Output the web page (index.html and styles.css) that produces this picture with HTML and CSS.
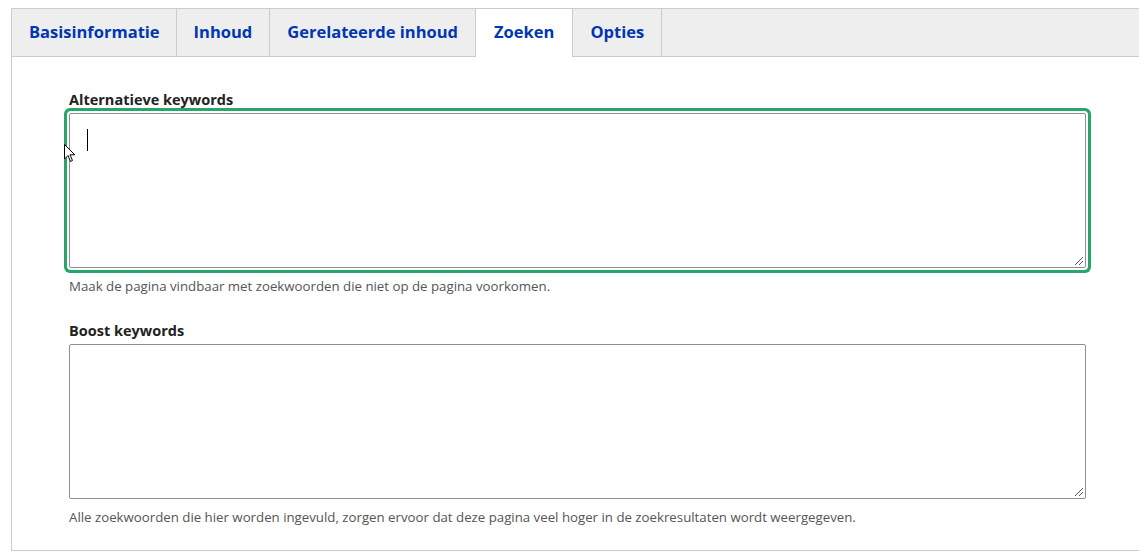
FILE: index.html
```html
<!DOCTYPE html>
<html lang="nl">
<head>
<meta charset="utf-8">
<link rel="stylesheet" href="styles.css">
</head>
<body>
<div class="panel">
  <nav class="tabs">
    <a class="tab">Basisinformatie</a>
    <a class="tab">Inhoud</a>
    <a class="tab">Gerelateerde inhoud</a>
    <a class="tab active">Zoeken</a>
    <a class="tab">Opties</a>
  </nav>
  <div class="content">
    <div class="field">
      <label class="label">Alternatieve keywords</label>
      <div class="textarea focused"><span class="caret"></span><svg class="pointer" width="12" height="19" viewBox="0 0 12 19"><path d="M0.5 0.5 L0.5 15 L4 11.5 L6.5 17.5 L8.5 16.5 L6 10.8 L10.8 10.8 Z" fill="#fff" stroke="#000" stroke-width="1"/></svg><span class="grip"></span></div>
      <div class="help">Maak de pagina vindbaar met zoekwoorden die niet op de pagina voorkomen.</div>
    </div>
    <div class="field">
      <label class="label">Boost keywords</label>
      <div class="textarea"><span class="grip"></span></div>
      <div class="help">Alle zoekwoorden die hier worden ingevuld, zorgen ervoor dat deze pagina veel hoger in de zoekresultaten wordt weergegeven.</div>
    </div>
  </div>
</div>
</body>
</html>
```
FILE: styles.css
```css
html, body { margin: 0; padding: 0; background: #fff; }
body { padding: 8px 0 0 11px; overflow: hidden; font-family: "Open Sans", "Noto Sans", sans-serif; }
.panel {
  width: 1140px;
  border: 1px solid #ccc;
  border-right: none;
  height: 543px;
  box-sizing: border-box;
}
.tabs {
  display: flex;
  height: 47px;
  background: #eee;
  border-bottom: 1px solid #ccc;
}
.tab {
  display: flex;
  align-items: center;
  padding: 0 17px 3px;
  border-right: 1px solid #ccc;
  color: #0036b1;
  font-weight: 700;
  font-size: 16.5px;
  cursor: pointer;
  height: 48px;
  box-sizing: border-box;
}
.tab:first-child { padding: 0 16px 3px 17px; }
.tab.active { background: #fff; padding: 0 18px 3px; }
.content { padding: 33px 0 0 57px; }
.field { margin-bottom: 25px; width: 1017px; }
.label {
  display: block;
  font-weight: 700;
  font-size: 14.5px;
  color: #222;
  line-height: 19px;
  margin-bottom: 4px;
}
.textarea {
  position: relative;
  height: 155px;
  border: 1px solid #8e8e96;
  border-radius: 2px;
  box-sizing: border-box;
  background: #fff;
}
.textarea.focused { box-shadow: 0 0 0 2px #fff, 0 0 0 5px #26a769; }
.caret {
  position: absolute;
  left: 17px;
  top: 15px;
  width: 1px;
  height: 22px;
  background: #000;
}
.pointer { position: absolute; left: -6px; top: 30px; }
.grip {
  position: absolute;
  right: 2px;
  bottom: 2px;
  width: 8px;
  height: 8px;
  background: linear-gradient(135deg, transparent 0 45%, #555 45% 52%, transparent 52% 70%, #555 70% 77%, transparent 77%);
}
.help {
  margin-top: 9px;
  font-size: 13.25px;
  color: #555;
  line-height: 19px;
}
```
